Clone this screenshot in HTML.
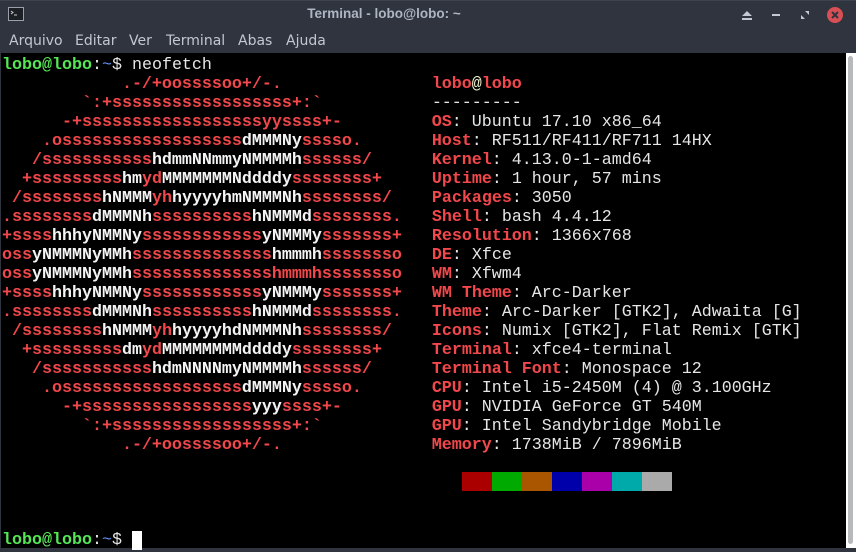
<!DOCTYPE html>
<html><head><meta charset="utf-8"><style>
html,body{margin:0;padding:0;background:#2f343f;width:856px;height:552px;overflow:hidden}
#title{position:absolute;left:0;top:0;width:856px;height:27px;background:#2f343f;border-top:1px solid #3e4350;box-sizing:border-box}
#title .t{position:absolute;left:0;width:768px;top:5px;text-align:center;font:bold 13.5px "Liberation Sans",sans-serif;color:#aeb6c3}
#menu{position:absolute;left:0;top:27px;width:856px;height:26px;background:#2f343f;font:14px "DejaVu Sans","Liberation Sans",sans-serif;color:#c3c8d0}
#menu span{position:absolute;top:6px}
#term{position:absolute;left:1px;top:53px;width:845px;height:495px;background:#000}
#sb{position:absolute;left:846px;top:53px;width:10px;height:495px;background:#fff}
#sb div{position:absolute;left:2px;top:3px;width:5px;height:488px;background:#b8b9bd;border-radius:3px}
pre{position:absolute;left:2px;top:56px;margin:0;font:16.67px/19px "Liberation Mono","DejaVu Sans Mono",monospace;color:#e6e6e6;white-space:pre}
.r{color:#f2474b;font-weight:bold}
.w{color:#f4f4f4;font-weight:bold}
.g{color:#55e655;font-weight:bold}
.b{color:#5f8fef}
.bars{position:absolute;top:472px;height:19px;width:30px}
</style></head><body>
<div id="title"><svg style="position:absolute;left:8px;top:6px" width="16" height="14"><rect x="0.5" y="0.5" width="15" height="13" fill="#1c1f26" stroke="#9aa0aa"/><path d="M3 4l2 1.5-2 1.5M6 8h3" stroke="#ccc" fill="none"/></svg>
<div class="t">Terminal - lobo@lobo: ~</div>
<svg style="position:absolute;left:741px;top:9px" width="12" height="10"><path d="M1 6L6 1l5 5z M1 8h10v2H1z" fill="#c4c9d1"/></svg>
<div style="position:absolute;left:772px;top:13px;width:8px;height:2px;background:#c4c9d1"></div>
<svg style="position:absolute;left:801px;top:10px" width="8" height="8"><path d="M4 0h4v4zM0 4v4h4z" fill="#c4c9d1"/></svg>
<div style="position:absolute;left:827px;top:6px;width:16px;height:16px;border-radius:8px;background:#d84f55"></div>
<svg style="position:absolute;left:831px;top:10px" width="8" height="8"><path d="M1 1l6 6M7 1l-6 6" stroke="#2f343f" stroke-width="2"/></svg>
</div>
<div id="menu"><span style="left:9px">Arquivo</span><span style="left:75px">Editar</span><span style="left:129px">Ver</span><span style="left:166px">Terminal</span><span style="left:238px">Abas</span><span style="left:286px">Ajuda</span></div>
<div id="term"></div>
<div id="sb"><div></div></div>
<pre><span class="g">lobo@lobo</span>:<span class="b">~</span>$ neofetch
<span class="r">            .-/+oossssoo+/-.               lobo</span><span style="color:#f0f0d0">@</span><span class="r">lobo</span>
<span class="r">        `:+ssssssssssssssssss+:`           </span>---------
<span class="r">      -+ssssssssssssssssssyyssss+-         OS</span>: Ubuntu 17.10 x86_64
<span class="r">    .ossssssssssssssssss</span><span class="w">dMMMNy</span><span class="r">sssso.       Host</span>: RF511/RF411/RF711 14HX
<span class="r">   /sssssssssss</span><span class="w">hdmmNNmmyNMMMMh</span><span class="r">ssssss/      Kernel</span>: 4.13.0-1-amd64
<span class="r">  +sssssssss</span><span class="w">hm</span><span class="r">yd</span><span class="w">MMMMMMMNddddy</span><span class="r">ssssssss+     Uptime</span>: 1 hour, 57 mins
<span class="r"> /ssssssss</span><span class="w">hNMMM</span><span class="r">yh</span><span class="w">hyyyyhmNMMMNh</span><span class="r">ssssssss/    Packages</span>: 3050
<span class="r">.ssssssss</span><span class="w">dMMMNh</span><span class="r">ssssssssss</span><span class="w">hNMMMd</span><span class="r">ssssssss.   Shell</span>: bash 4.4.12
<span class="r">+ssss</span><span class="w">hhhyNMMNy</span><span class="r">ssssssssssss</span><span class="w">yNMMMy</span><span class="r">sssssss+   Resolution</span>: 1366x768
<span class="r">oss</span><span class="w">yNMMMNyMMh</span><span class="r">ssssssssssssss</span><span class="w">hmmmh</span><span class="r">ssssssso   DE</span>: Xfce
<span class="r">oss</span><span class="w">yNMMMNyMMh</span><span class="r">sssssssssssssshmmmhssssssso   WM</span>: Xfwm4
<span class="r">+ssss</span><span class="w">hhhyNMMNy</span><span class="r">ssssssssssss</span><span class="w">yNMMMy</span><span class="r">sssssss+   WM Theme</span>: Arc-Darker
<span class="r">.ssssssss</span><span class="w">dMMMNh</span><span class="r">ssssssssss</span><span class="w">hNMMMd</span><span class="r">ssssssss.   Theme</span>: Arc-Darker [GTK2], Adwaita [G]
<span class="r"> /ssssssss</span><span class="w">hNMMM</span><span class="r">yh</span><span class="w">hyyyyhdNMMMNh</span><span class="r">ssssssss/    Icons</span>: Numix [GTK2], Flat Remix [GTK]
<span class="r">  +sssssssss</span><span class="w">dm</span><span class="r">yd</span><span class="w">MMMMMMMMddddy</span><span class="r">ssssssss+     Terminal</span>: xfce4-terminal
<span class="r">   /sssssssssss</span><span class="w">hdmNNNNmyNMMMMh</span><span class="r">ssssss/      Terminal Font</span>: Monospace 12
<span class="r">    .ossssssssssssssssss</span><span class="w">dMMMNy</span><span class="r">sssso.       CPU</span>: Intel i5-2450M (4) @ 3.100GHz
<span class="r">      -+sssssssssssssssss</span><span class="w">yyy</span><span class="r">ssss+-         GPU</span>: NVIDIA GeForce GT 540M
<span class="r">        `:+ssssssssssssssssss+:`           GPU</span>: Intel Sandybridge Mobile
<span class="r">            .-/+oossssoo+/-.               Memory</span>: 1738MiB / 7896MiB




<span class="g">lobo@lobo</span>:<span class="b">~</span>$ <span style="background:#fff"> </span></pre>
<div class="bars" style="left:462px;background:#aa0000"></div>
<div class="bars" style="left:492px;background:#00aa00"></div>
<div class="bars" style="left:522px;background:#aa5500"></div>
<div class="bars" style="left:552px;background:#0000aa"></div>
<div class="bars" style="left:582px;background:#aa00aa"></div>
<div class="bars" style="left:612px;background:#00aaaa"></div>
<div class="bars" style="left:642px;background:#aaaaaa"></div>
</body></html>
